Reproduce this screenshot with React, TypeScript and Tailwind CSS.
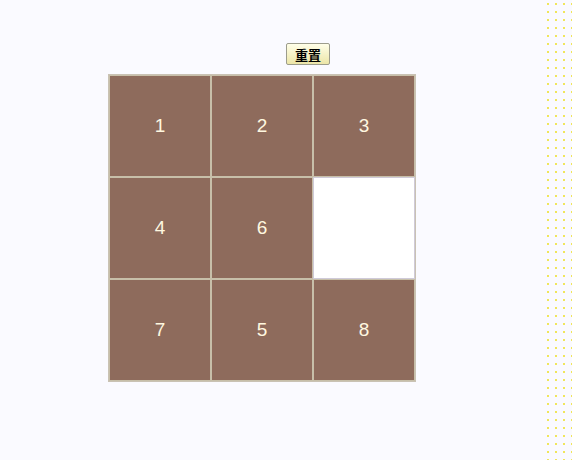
import React, { useState } from "react";

const initial = [1, 2, 3, 4, 6, 0, 7, 5, 8];

export default function App() {
  const [tiles, setTiles] = useState<number[]>(initial);
  return (
    <div className="relative w-[572px] h-[460px] bg-[#fafaff] overflow-hidden font-['Liberation_Sans',Arial,sans-serif]">
      <div className="absolute right-0 top-0 w-[28px] h-full bg-[radial-gradient(circle,#f0e65a_0.9px,transparent_1.1px)] bg-[size:8px_8px]" />
      <div className="flex flex-col pt-[43px]">
        <div className="pl-[286px] flex">
          <button
            onClick={() => setTiles(initial)}
            className="w-[44px] h-[22px] border border-[#9c9c8c] rounded-[2px] bg-[linear-gradient(#fffee8,#ece6a8)] text-[13px] font-bold text-black leading-none font-['Noto_Sans_CJK_SC',sans-serif]"
          >
            重置
          </button>
        </div>
        <div className="ml-[108px] mt-[9px] w-[308px] border border-[#c9c2b4] grid grid-cols-3">
          {tiles.map((t, i) => (
            <div
              key={i}
              className={
                t === 0
                  ? "w-[102px] h-[102px] border border-[#cfcad8] bg-white"
                  : "w-[102px] h-[102px] border border-[#c7bfa9] bg-[#8e6b5c] flex items-center justify-center text-[19px] text-[#fff8e0]"
              }
            >
              {t !== 0 ? t : ""}
            </div>
          ))}
        </div>
      </div>
    </div>
  );
}
